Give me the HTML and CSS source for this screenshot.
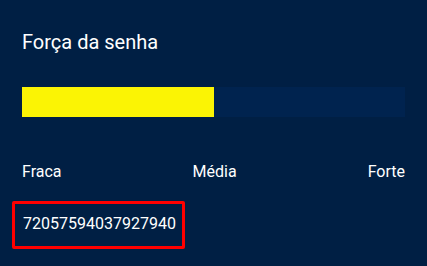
FILE: index.html
```html
<!DOCTYPE html>
<html lang="pt">
<head>
<meta charset="utf-8">
<link rel="stylesheet" href="styles.css">
</head>
<body>
<main class="panel">
  <h1 class="title">Força da senha</h1>
  <div class="meter">
    <div class="meter-fill" style="width: 50.1%"></div>
  </div>
  <div class="labels">
    <span>Fraca</span>
    <span>Média</span>
    <span>Forte</span>
  </div>
  <div class="value-box">72057594037927940</div>
</main>
</body>
</html>
```
FILE: styles.css
```css
html, body {
  margin: 0;
  padding: 0;
  background: #001f44;
  width: 427px;
  height: 266px;
  overflow: hidden;
}
.panel {
  font-family: Roboto, "Liberation Sans", sans-serif;
  color: #ffffff;
  padding: 28px 22px 0 22px;
  display: flex;
  flex-direction: column;
}
.title {
  margin: 0;
  font-size: 20px;
  font-weight: 400;
  line-height: 28px;
}
.meter {
  margin-top: 31px;
  height: 30px;
  background: #00234f;
  display: flex;
}
.meter-fill {
  background: #fbf404;
  height: 100%;
}
.labels {
  margin-top: 45px;
  display: flex;
  justify-content: space-between;
  font-size: 16px;
  line-height: 20px;
}
.value-box {
  align-self: flex-start;
  margin-top: 19px;
  margin-left: -10px;
  border: 3px solid #ff0000;
  border-radius: 2px;
  padding: 10px 6px 12px 8px;
  font-size: 16px;
  line-height: 20px;
}
```
